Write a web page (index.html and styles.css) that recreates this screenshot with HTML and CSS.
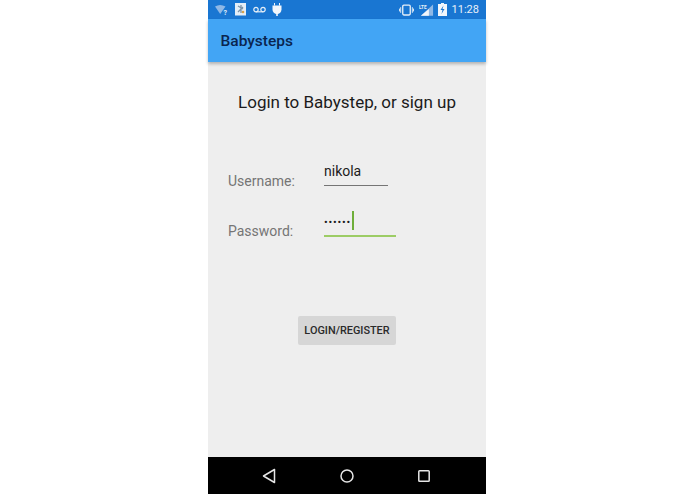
FILE: index.html
```html
<!DOCTYPE html>
<html lang="en">
<head>
  <meta charset="UTF-8">
  <title>Babysteps</title>
  <meta name="viewport" content="width=device-width, initial-scale=1.0">
  <link rel="stylesheet" href="styles.css">
</head>
<body>
  <div class="phone">
    <div class="status-bar">
      <div class="status-left">
        <svg class="icon" width="14" height="12" viewBox="0 0 14 12"><path d="M0 2.500 Q5 -0.500 10.500 2.500 L5.200 10z" fill="#8fb8e6"/><text x="8.600" y="11" class="wifi-q">?</text></svg>
        <svg class="icon" width="12" height="13" viewBox="0 0 12 13"><rect width="11" height="12.500" fill="#e4eef7"/><path d="M3 3l5 3M6 2v8M3 9l5-5" stroke="#7b93a8" stroke-width="1.300"/><circle cx="8" cy="9" r="1.300" fill="#d8a24a"/></svg>
        <svg class="icon" width="13" height="8" viewBox="0 0 13 8"><circle cx="3" cy="3.600" r="2.200" fill="none" stroke="#e4eef7" stroke-width="1.200"/><circle cx="10" cy="3.600" r="2.200" fill="none" stroke="#e4eef7" stroke-width="1.200"/><path d="M3 5.800h7" stroke="#e4eef7" stroke-width="1.200"/></svg>
        <svg class="icon" width="10" height="13" viewBox="0 0 10 13"><path d="M2.500 0v2.500M7.500 0v2.500" stroke="#f2f6fb" stroke-width="1"/><path d="M0.500 2.500h9v4a4.500 4.500 0 0 1-9 0z" fill="#f2f6fb"/><path d="M4.200 10h1.600v3h-1.600z" fill="#f2f6fb"/></svg>
      </div>
      <div class="status-right">
        <svg class="icon" width="15" height="12" viewBox="0 0 16 12"><rect x="4" y="0.700" width="8" height="10.600" rx="1.200" fill="none" stroke="#e8f0f8" stroke-width="1.400"/><path d="M1.800 3v6M14.200 3v6M0.500 4.500v3M15.500 4.500v3" stroke="#e8f0f8" stroke-width="1"/></svg>
        <svg class="icon" width="15" height="14" viewBox="0 0 16 14"><path d="M15 1v12H2z" fill="#8fb8e6"/><path d="M10.500 6v7H2z" fill="#f2f6fb"/><text x="0" y="5.500" class="lte">LTE</text></svg>
        <svg class="icon" width="9" height="13" viewBox="0 0 9 13"><path d="M3 0h3v1h3v12H0V1h3z" fill="#f2f6fb"/><path d="M5.500 2.500L2.500 7h2l-1 4 3-5h-2z" fill="#1976d2"/></svg>
        <span class="clock">11:28</span>
      </div>
    </div>
    <div class="app-bar">Babysteps</div>
    <div class="content">
      <h1 class="heading">Login to Babystep, or sign up</h1>
      <div class="form">
        <div class="row">
          <span class="label">Username:</span>
          <div class="field field-user"><span class="value">nikola</span></div>
        </div>
        <div class="row">
          <span class="label">Password:</span>
          <div class="field field-pass"><span class="value dots">••••••</span><span class="caret"></span></div>
        </div>
      </div>
      <button class="login-btn">LOGIN/REGISTER</button>
    </div>
    <div class="nav-bar">
      <svg width="14" height="16" viewBox="0 0 14 16"><path d="M12.500 1.500v13L1.500 8z" fill="none" stroke="#e6e6e6" stroke-width="1.500" stroke-linejoin="round"/></svg>
      <svg width="14" height="14" viewBox="0 0 14 14"><circle cx="7" cy="7" r="6" fill="none" stroke="#e6e6e6" stroke-width="1.500"/></svg>
      <svg width="12" height="12" viewBox="0 0 12 12"><rect x="0.800" y="0.800" width="10.400" height="10.400" rx="0.800" fill="none" stroke="#e6e6e6" stroke-width="1.500"/></svg>
    </div>
  </div>
</body>
</html>
```

FILE: styles.css
```css
html, body {
  height: 100%;
}
body {
  margin: 0;
  background: #fff;
  font-family: Roboto, "Liberation Sans", sans-serif;
}
.phone {
  display: flex;
  flex-direction: column;
  width: 278px;
  height: 494px;
  margin-left: 208px;
  background: #eeeeee;
}
.status-bar {
  display: flex;
  justify-content: space-between;
  align-items: center;
  height: 19px;
  padding: 0 7px;
  background: #1976d2;
  color: #e8f0f8;
}
.status-left, .status-right {
  display: flex;
  align-items: center;
}
.status-left {
  gap: 6px;
}
.status-right {
  gap: 4.500px;
}
.icon {
  display: block;
}
.wifi-q {
  font-size: 7px;
  font-weight: 700;
  fill: #e4eef7;
}
.lte {
  font-size: 5px;
  font-weight: 700;
  fill: #e8f0f8;
}
.clock {
  font-size: 11px;
}
.app-bar {
  display: flex;
  align-items: center;
  height: 43px;
  padding-left: 12.500px;
  background: #42a5f5;
  color: #0a2550;
  font-size: 15.500px;
  font-weight: 500;
  box-shadow: 0 2px 3px rgba(0, 0, 0, 0.25);
  position: relative;
}
.content {
  flex: 1;
  display: flex;
  flex-direction: column;
}
.heading {
  margin: 30px 0 0;
  text-align: center;
  font-size: 17px;
  font-weight: 400;
  line-height: 21px;
  color: #1b1b1b;
}
.form {
  display: flex;
  flex-direction: column;
  gap: 23px;
  margin: 50px 0 0 20px;
}
.row {
  display: flex;
  align-items: flex-end;
  height: 27px;
}
.label {
  width: 96px;
  font-size: 14px;
  line-height: 17px;
  color: #757575;
}
.field {
  display: flex;
  align-items: center;
  height: 27px;
  margin-bottom: 4px;
  padding-bottom: 2px;
  box-sizing: border-box;
  border-bottom: 1px solid #757575;
}
.field-user {
  width: 64px;
}
.field-pass {
  width: 72px;
  padding-bottom: 0;
  margin-bottom: 3px;
  border-bottom: 2px solid #9ccc65;
}
.value {
  font-size: 14px;
  color: #1c1c1c;
}
.dots {
  font-size: 11px;
  letter-spacing: 0.800px;
}
.caret {
  width: 1.500px;
  height: 19px;
  margin: 0 0 4px 1px;
  background: #6fae3a;
}
.login-btn {
  align-self: flex-start;
  width: 98px;
  height: 29px;
  margin: 76px 0 0 90px;
  padding: 0;
  border: none;
  border-radius: 2px;
  background: #d6d6d6;
  color: #2a2a2a;
  font-family: inherit;
  font-size: 10.900px;
  font-weight: 500;
}
.nav-bar {
  display: flex;
  align-items: center;
  justify-content: center;
  gap: 64px;
  height: 37px;
  padding-right: 2px;
  background: #000;
}
```
